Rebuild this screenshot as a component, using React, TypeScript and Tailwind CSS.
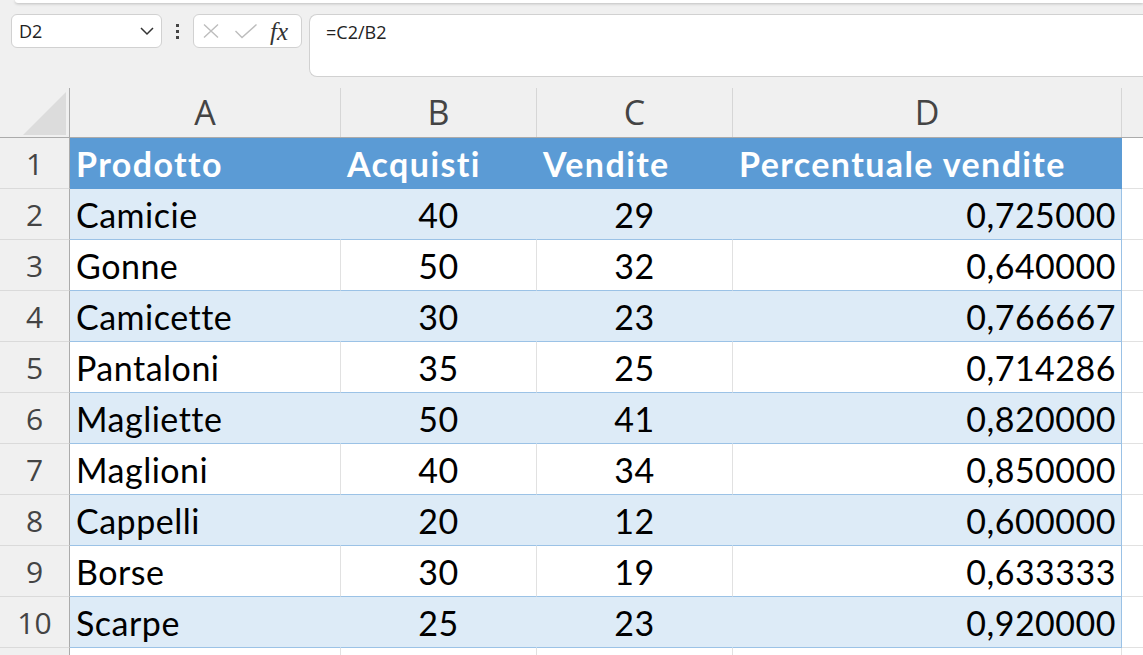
import React from 'react';

const rows = [
  { n: 2, name: 'Camicie', a: 40, v: 29, p: '0,725000' },
  { n: 3, name: 'Gonne', a: 50, v: 32, p: '0,640000' },
  { n: 4, name: 'Camicette', a: 30, v: 23, p: '0,766667' },
  { n: 5, name: 'Pantaloni', a: 35, v: 25, p: '0,714286' },
  { n: 6, name: 'Magliette', a: 50, v: 41, p: '0,820000' },
  { n: 7, name: 'Maglioni', a: 40, v: 34, p: '0,850000' },
  { n: 8, name: 'Cappelli', a: 20, v: 12, p: '0,600000' },
  { n: 9, name: 'Borse', a: 30, v: 19, p: '0,633333' },
  { n: 10, name: 'Scarpe', a: 25, v: 23, p: '0,920000' },
];

const RowHead: React.FC<{ n: number }> = ({ n }) => (
  <div className="flex w-[70px] shrink-0 items-center justify-center border-r border-b border-r-[#ababab] border-b-[#dadada] bg-[#f0f0f0] font-[family-name:'Open_Sans',sans-serif] text-[30px] font-normal tracking-normal text-[#444]">
    {n}
  </div>
);

const FormulaBar: React.FC = () => (
  <div className="mt-[11px] flex h-[63px] items-start font-[family-name:'Open_Sans',sans-serif] text-[#222]">
    {/* name box */}
    <div className="ml-[11px] flex h-[34px] w-[151px] items-center justify-between rounded-md border border-[#d1d1d1] bg-white pl-[7px] pr-[6px] text-[18px]">
      <span>D2</span>
      <svg width="16" height="10" viewBox="0 0 16 10">
        <polyline points="2,2 8,8 14,2" fill="none" stroke="#333" strokeWidth="1.5" />
      </svg>
    </div>
    <div className="flex h-[34px] w-[31px] flex-col items-center justify-center gap-[3px]">
      <div className="h-[3px] w-[3px] bg-[#444]" />
      <div className="h-[3px] w-[3px] bg-[#444]" />
      <div className="h-[3px] w-[3px] bg-[#444]" />
    </div>
    {/* cancel / enter / fx */}
    <div className="flex h-[34px] w-[109px] items-center rounded-md border border-[#d1d1d1] bg-white pl-[8px]">
      <svg width="18" height="16" viewBox="0 0 18 16">
        <path d="M2 1.5 L16 14.5 M16 1.5 L2 14.5" stroke="#bdbdbd" strokeWidth="1.4" fill="none" />
      </svg>
      <svg className="ml-[14px]" width="24" height="16" viewBox="0 0 24 16">
        <polyline points="1.5,8 8,14.5 22.5,1.5" stroke="#bdbdbd" strokeWidth="1.4" fill="none" />
      </svg>
      <span className="ml-[12px] font-[family-name:'Liberation_Serif',serif] text-[25px] italic leading-none text-[#333]">
        fx
      </span>
    </div>
    <div className="ml-[7px] flex h-[63px] flex-1 items-start rounded-l-lg border border-r-0 border-[#d1d1d1] bg-white pl-[16px] pt-[4px] text-[18px]">
      =C2/B2
    </div>
  </div>
);

export default function App() {
  return (
    <div className="h-[655px] w-full overflow-hidden bg-[#f0f0f0]">
      <div className="ml-[15px] h-[3px] rounded-bl-[6px] bg-white shadow-[0_1px_3px_rgba(0,0,0,0.22)]" />
      <FormulaBar />

      {/* column headers */}
      <div className="mt-[11px] flex h-[50px] border-b border-[#ababab] font-[family-name:'Open_Sans',sans-serif] text-[34px] text-[#444]">
        <div className="flex w-[70px] shrink-0 items-end justify-end border-r border-[#ababab] pb-[2px] pr-[3px]">
          <svg width="43" height="43" viewBox="0 0 43 43">
            <polygon points="43,0 43,43 0,43" fill="#dcdcdc" />
          </svg>
        </div>
        <div className="flex w-[271px] shrink-0 items-center justify-center border-r border-[#d6d6d6]">A</div>
        <div className="flex w-[196px] shrink-0 items-center justify-center border-r border-[#d6d6d6]">B</div>
        <div className="flex w-[196px] shrink-0 items-center justify-center border-r border-[#d6d6d6]">C</div>
        <div className="flex w-[389px] shrink-0 items-center justify-center border-r border-[#d6d6d6]">D</div>
        <div className="flex-1" />
      </div>

      {/* header row */}
      <div className="flex h-[51px] font-[family-name:Lato,sans-serif] text-[34px] font-bold tracking-[1.4px] text-white">
        <RowHead n={1} />
        <div className="flex w-[271px] shrink-0 items-center bg-[#5b9bd5] pl-[6px]">Prodotto</div>
        <div className="flex w-[196px] shrink-0 items-center bg-[#5b9bd5] pl-[6px]">Acquisti</div>
        <div className="flex w-[196px] shrink-0 items-center bg-[#5b9bd5] pl-[6px]">Vendite</div>
        <div className="flex w-[389px] shrink-0 items-center border-r border-[#5b9bd5] bg-[#5b9bd5] pl-[6px]">
          Percentuale vendite
        </div>
        <div className="flex-1 border-b border-[#e1e1e1] bg-white" />
      </div>

      {/* data rows */}
      {rows.map((r, i) => {
        const band = i % 2 === 0;
        const cell = band
          ? 'bg-[#ddebf7] border-r border-r-[#ddebf7]'
          : 'bg-white border-r border-r-[#e1e1e1]';
        return (
          <div key={r.n} className="flex h-[51px] font-[family-name:Lato,sans-serif] text-[34px] tracking-[0.5px] text-black">
            <RowHead n={r.n} />
            <div className={`flex w-[271px] shrink-0 items-center border-b border-b-[#9bc2e6] pl-[6px] ${cell}`}>
              {r.name}
            </div>
            <div className={`flex w-[196px] shrink-0 items-center justify-center border-b border-b-[#9bc2e6] ${cell}`}>
              {r.a}
            </div>
            <div className={`flex w-[196px] shrink-0 items-center justify-center border-b border-b-[#9bc2e6] ${cell}`}>
              {r.v}
            </div>
            <div
              className={`flex w-[389px] shrink-0 items-center justify-end border-r border-b border-b-[#9bc2e6] border-r-[#9bc2e6] pr-[5px] ${
                band ? 'bg-[#ddebf7]' : 'bg-white'
              }`}
            >
              {r.p}
            </div>
            <div className="flex-1 border-b border-[#e1e1e1] bg-white" />
          </div>
        );
      })}

      {/* row 11, cut off */}
      <div className="flex h-[51px]">
        <div className="w-[70px] shrink-0 border-r border-[#ababab] bg-[#f0f0f0]" />
        <div className="w-[271px] shrink-0 border-r border-[#e1e1e1] bg-white" />
        <div className="w-[196px] shrink-0 border-r border-[#e1e1e1] bg-white" />
        <div className="w-[196px] shrink-0 border-r border-[#e1e1e1] bg-white" />
        <div className="w-[389px] shrink-0 border-r border-[#e1e1e1] bg-white" />
        <div className="flex-1 bg-white" />
      </div>
    </div>
  );
}
